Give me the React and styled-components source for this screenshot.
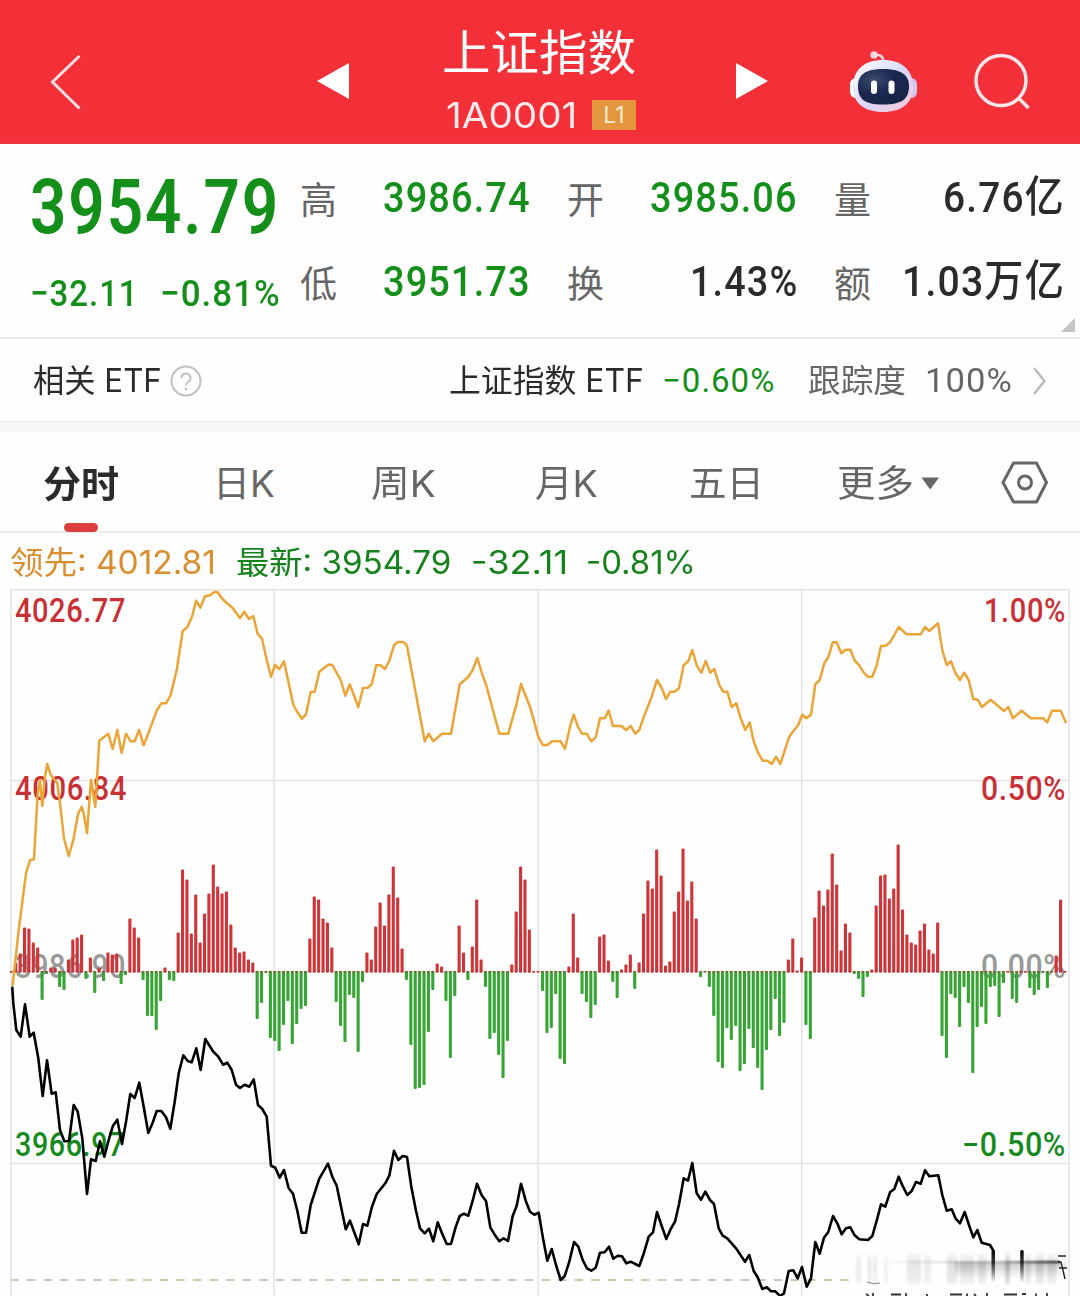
import React, { useLayoutEffect, useRef, useState } from "react"
import styled, { createGlobalStyle } from "styled-components"

const GlobalStyle = createGlobalStyle`
  * {
    box-sizing: border-box;
  }
  body {
    margin: 0;
    background: #fff;
    overflow: hidden;
  }
`

const sans = `"Inter", "Noto Sans CJK SC", sans-serif`
const din = `"Roboto", "Noto Sans CJK SC", sans-serif`

const green = "#14901a"
const ink = "#2b2b2b"
const grey = "#666"

const Page = styled.div`
  width: 1080px;
  height: 1296px;
  overflow: hidden;
  display: flex;
  flex-direction: column;
  background: #fefefe;
  color: ${ink};
  font-family: ${sans};
`

const FitBox = styled.span`
  display: block;
  flex: none;
  width: ${(props) => props.$width}px;
  height: ${(props) => props.$line || 40}px;
  line-height: ${(props) => props.$line || 40}px;
  margin-left: ${(props) => props.$gap || 0}px;
  font-family: ${(props) => (props.$sans ? sans : din)};
  font-size: ${(props) => props.$size}px;
  font-weight: ${(props) => props.$weight || 400};
  letter-spacing: ${(props) => (props.$sans ? "0" : "0.03em")};
  color: ${(props) => props.$color || "inherit"};
  white-space: pre;
`
const FitText = styled.span`
  display: inline-block;
  transform-origin: 0 50%;
`

// Condenses a label so that it always fills the width it is given
const Fit = ({ children, ...props }) => {
  const ref = useRef(null)
  const [scale, setScale] = useState(1)

  useLayoutEffect(() => {
    setScale(props.$width / ref.current.offsetWidth)
  }, [props.$width, children])

  return (
    <FitBox {...props}>
      <FitText ref={ref} style={{ transform: `scaleX(${scale})` }}>
        {children}
      </FitText>
    </FitBox>
  )
}

const Header = styled.header`
  flex: none;
  height: 144px;
  padding: 20px 0 0 50px;
  display: grid;
  grid-template-columns: 267px 125px 294px 113px 124px 58px;
  align-items: center;
  background: #f32f38;
  color: #fff;
  border-bottom: 1px solid #d5444a;
`
const TitleBlock = styled.div`
  align-self: start;
  width: 196px;
  margin-top: 5px;
  display: flex;
  flex-direction: column;
  gap: 18px;
`
const CodeRow = styled.div`
  display: flex;
  align-items: center;
  height: 32px;
  padding-left: 4px;
`
const LevelBadge = styled.span`
  width: 44px;
  height: 30px;
  margin-left: 15px;
  display: flex;
  align-items: center;
  justify-content: center;
  background: #e4963f;
  color: #ffeccb;
  font-size: 23px;
`

const Quote = styled.section`
  flex: none;
  height: 195px;
  display: flex;
  padding-left: 30px;
  border-bottom: 2px solid #ececec;
  position: relative;
`
const Price = styled.div`
  width: 270px;
  padding-top: 26px;
  color: ${green};
`
const Change = styled.div`
  display: flex;
  margin-top: 26px;
`
const Stats = styled.div`
  display: grid;
  grid-template-columns: repeat(3, 231px);
  grid-template-rows: 84px 84px;
  column-gap: 36px;
  padding-top: 11px;
`
const Stat = styled.div`
  display: flex;
  align-items: center;
  justify-content: space-between;
`
const StatLabel = styled.span`
  font-size: 37px;
  line-height: 40px;
  padding-top: 8px;
  color: ${grey};
`
const Corner = styled.svg`
  position: absolute;
  right: 5px;
  bottom: 5px;
`

const Etf = styled.section`
  flex: none;
  height: 82px;
  padding: 1px 0 0 33px;
  display: flex;
  align-items: center;
  color: ${ink};

  svg {
    margin-left: 8px;
  }
`
const Band = styled.div`
  flex: none;
  height: 11px;
  background: #f6f6f7;
  border-top: 1px solid #eee;
`

const Tabs = styled.nav`
  flex: none;
  height: 101px;
  padding-left: 43px;
  display: grid;
  grid-template-columns: 170px 158px 164px 154px 148px 164px 50px;
  border-bottom: 2px solid #ececec;
  color: ${grey};
`
const Tab = styled.div`
  height: 100px;
  padding-top: 3px;
  display: flex;
  align-items: center;
`
const ActiveTab = styled(Tab)`
  width: 76px;
  padding-top: 33px;
  flex-direction: column;

  &::after {
    content: "";
    width: 34px;
    height: 9px;
    margin-top: 18px;
    border-radius: 5px;
    background: #dc3f3d;
  }
`

const Legend = styled.div`
  flex: none;
  height: 56px;
  padding: 10px 0 0 10px;
  display: flex;
  color: #15821b;
`

const ChartSvg = styled.svg`
  flex: none;
  display: block;
`
const AxisText = styled.text`
  font-family: ${din};
  font-size: 32.5px;
  font-weight: 500;
  letter-spacing: 0.02em;
`

const stats = [
  { label: "高", value: "3986.74", width: 148, color: green },
  { label: "开", value: "3985.06", width: 148, color: green },
  { label: "量", value: "6.76亿", width: 122 },
  { label: "低", value: "3951.73", width: 148, color: green },
  { label: "换", value: "1.43%", width: 108 },
  { label: "额", value: "1.03万亿", width: 163 },
]

// One bar for each minute, in pixels above or below the zero line
const bars = [
  0, 10, 19, 45, 44, 30, 25, -29, -3, 5, 5, -16, -19, 13, 33, 35, 38, -8, 15,
  -22, 5, -10, 20, 18, 19, -13, -4, 54, 45, 35, -9, -45, -45, -59, -30, 5, -9,
  -10, 40, 103, 93, 39, 78, 30, 59, 79, 108, 86, 79, 81, 48, 25, 20, 21, 13,
  10, -48, -32, -2, -67, -70, -80, -54, -30, -73, -53, -38, -35, 34, 76, 73,
  54, 50, 25, -31, -55, -71, -24, -27, -81, -11, 20, 13, 46, 70, 47, 78, 106,
  75, 24, -9, -74, -118, -117, -114, -61, -19, 9, 6, -30, -87, -25, 47, 20, -9,
  26, 73, 13, -16, -68, -62, -84, -107, -70, 8, 61, 106, 93, 43, 0, 0, -20,
  -62, -57, -23, -88, -93, 6, 59, 15, -23, -31, -47, -34, 36, 38, 12, -11, -27,
  3, 8, 18, -18, 10, 59, 92, 84, 123, 97, 7, 11, 61, 81, 124, 72, 91, 54, -6,
  -1, -16, -45, -91, -97, -57, -69, -55, -100, -93, -58, -77, -97, -119, -79,
  -59, -28, -65, -52, 13, 34, 2, 15, -54, -68, 55, 82, 67, 83, 119, 88, 22, 49,
  40, -3, -8, -26, -6, 3, 67, 97, 98, 74, 84, 128, 63, 38, 30, 28, 42, 49, 23,
  19, 50, -65, -87, -23, -27, -56, -16, -32, -102, -56, -36, -53, -16, -15,
  -46, -12, 0, -28, -32, 0, 0, -17, -24, -19, -2, -17, -1, 17, 73, 0,
]

// Both curves are stored in thirds of a pixel: [x offset, y offset, points]
const leadCurve = [
  [0, 580, "38,1215 55,1060 65,980 78,880 90,840 102,838 113,640 120,600 127,678 135,590 142,552 152,585 172,610 180,670 192,775 206,828 220,780 235,700 245,680 252,705 261,760 273,600 286,680 298,482 325,461 338,507 352,450 365,519 378,461 392,484 404,484 417,450 431,496 445,460 470,392 484,370 498,370 512,345 530,270 548,153 562,142 577,108 588,62 601,83 615,49 630,46 643,36 653,37 665,54 680,69 698,84 720,115 733,95 747,117 760,108 773,162 786,176 800,240 813,290"],
  [270, 580, "15,255 28,267 42,244 70,375 82,396 96,416 108,403 122,336 134,335 148,275 175,254 186,254 212,300 226,347 239,313 265,381 279,324 293,323 305,313 319,256 331,255 345,267 358,242 372,196 383,186 400,186 411,197 430,300 464,484 476,461 490,484 516,461 543,461 569,313 594,292 608,270 622,234 635,278 650,320 688,461 715,461 740,370 753,312 780,380 805,470"],
  [540, 580, "8,495 22,495 36,484 62,484 75,507 90,440 101,404 113,438 126,461 140,461 154,484 167,472 180,415 194,415 206,392 219,438 245,438 258,450 272,438 286,461 298,450 310,415 335,350 351,300 365,324 378,357 391,335 405,335 417,324 431,256 445,244 457,210 470,256 484,278 497,243 511,278 523,267 537,313 549,335 562,335 575,381 589,370 602,415 616,450 629,427 640,480 654,518 668,542 682,542 695,552 708,530 721,552 734,512 748,470 762,450 773,438"],
  [800, 580, "7,404 19,415 33,404 46,313 59,300 73,250 85,232 98,187 110,187 124,220 137,209 151,209 165,243 178,256 191,278 203,290 217,290 230,256 243,198 257,197 270,187 283,165 296,141 320,163 362,163 375,141 388,153 414,130 427,210 440,255 453,244 466,278 480,300 493,278 506,300 520,357 533,359 546,381 572,359 612,393 625,381 639,415 665,392 692,415 730,415 742,427 756,392 782,392 797,427"],
]
const priceCurve = [
  [0, 940, "37,143 40,190 49,270 62,290 75,193 89,290 101,278 115,355 128,468 141,361 155,461 167,457 180,570 193,604 207,603 221,495 233,515 247,595 261,762 273,658 287,663 300,604 313,650 326,600 339,557 352,539 366,612 378,545 391,462 404,474 418,428 431,500 445,579 458,548 470,513 484,513 498,532 511,566 524,485 536,400 550,346 563,363 575,367 589,325 602,390 616,297 640,335 655,350 669,374 682,368 695,390 708,434 720,444 734,434 748,440 761,418 774,495 787,507 800,530 813,677 826,683 839,713 852,690 866,745 879,761 892,812 905,878 918,878 932,795 958,716 984,671 997,710 1010,737 1037,868 1050,842 1076,913"],
  [360, 940, "9,852 22,857 36,800 50,762 76,730 88,707 102,632 115,660 128,648 141,651 154,740 168,812 180,865 194,880 207,866 220,904 233,847 246,880 260,912 273,912 286,865 299,828 312,821 325,827 338,782 351,731 365,766 378,783 391,862 404,884 418,904 431,895 444,903 458,828 470,797 483,731 497,782 510,815 523,824 536,818 549,895 562,962 575,927 589,978 602,1020 614,1008 628,965 642,906 655,920 668,960 681,985 694,992 707,983 720,938 734,937 747,920 760,956 773,947 786,949 799,970 812,965 838,978 852,938 866,890 879,877 891,816 905,858 919,897 932,867 945,845 957,793 971,715 984,722 997,669 1010,760 1023,779 1036,755 1050,780 1062,792 1076,865"],
  [720, 940, "8,887 22,895 48,925 75,965 88,945 101,993 113,1012 127,1047 140,1042 153,1054 166,1054 180,1068 192,1060 206,993 220,991 233,1015 246,981 260,1040 273,1015 286,906 299,941 312,893 325,876 339,828 352,850 365,883 378,865 391,862 404,886 418,898 444,900 457,888 470,842 483,793 496,800 510,757 523,747 536,710 549,740 562,765 575,753 588,726 602,731 615,691 628,709 655,706 667,765 680,812 695,808 707,836 720,850 734,816 747,855 760,892 772,870 785,908 810,915 820,932"],
]

const toPoints = (curve) =>
  curve
    .map(([dx, dy, points]) =>
      points
        .split(" ")
        .map((point) => {
          const [x, y] = point.split(",")
          return `${(dx + x / 3).toFixed(1)},${(dy + y / 3).toFixed(1)}`
        })
        .join(" ")
    )
    .join(" ")

const axis = [
  { text: "4026.77", x: 15, y: 621.5, width: 111, color: "#c93036" },
  { text: "1.00%", x: 984, y: 621.5, width: 82, color: "#c93036" },
  { text: "4006.84", x: 15, y: 799.5, width: 112, color: "#c93036" },
  { text: "0.50%", x: 981, y: 799.5, width: 85, color: "#c93036" },
  { text: "3986.90", x: 15, y: 977.5, width: 111, color: "#999" },
  { text: "0.00%", x: 981, y: 977.5, width: 85, color: "#999" },
  { text: "3966.97", x: 15, y: 1156, width: 110, color: "#178a1e" },
  { text: "−0.50%", x: 962, y: 1156, width: 104, color: "#178a1e" },
]

// [x, width, opacity] of the smeared strokes in the corner
const streaks = [
  [856, 5, 0.08],
  [868, 3, 0.12],
  [873, 4, 0.08],
  [884, 4, 0.06],
  [907, 14, 0.1],
  [924, 7, 0.08],
  [947, 10, 0.12],
  [960, 14, 0.1],
  [978, 8, 0.12],
  [1005, 5, 0.22],
  [1025, 6, 0.12],
  [1036, 8, 0.14],
  [1047, 9, 0.12],
]

const Robot = () => (
  <svg width="68" height="64" viewBox="849 47 68 64">
    <defs>
      <linearGradient id="shell" x1="0" y1="0" x2="1" y2="1">
        <stop offset="0" stopColor="#fff" />
        <stop offset="0.55" stopColor="#d8d6fb" />
        <stop offset="1" stopColor="#fbc9d6" />
      </linearGradient>
      <radialGradient id="visor" cx="0.3" cy="0.3" r="0.8">
        <stop offset="0" stopColor="#3d4a70" />
        <stop offset="0.5" stopColor="#1c284f" />
        <stop offset="1" stopColor="#172449" />
      </radialGradient>
    </defs>
    <path
      d="M874 52 Q883 50 884 60"
      fill="none"
      stroke="#fbdce4"
      strokeWidth="2.5"
    />
    <circle cx="874" cy="52" r="3.7" fill="#fbd6e0" />
    <rect x="850" y="75" width="12" height="20" rx="6" fill="#fff" />
    <rect x="905" y="75" width="12" height="20" rx="6" fill="#d5c3f2" />
    <path
      d="M883 57 C902 57 913 67 913 84 C913 100 902 109 883 109 C864 109 853 100 853 84 C853 67 864 57 883 57Z"
      fill="url(#shell)"
    />
    <path
      d="M883 66 C901 66 909 72 909 83 C909 96 902 101.500 883 101.500 C864 101.500 858 96 858 83 C858 72 865 66 883 66Z"
      fill="url(#visor)"
    />
    <rect x="871" y="77.500" width="6" height="13.500" rx="3" fill="#fff" />
    <rect x="888.500" y="77.500" width="6" height="13.500" rx="3" fill="#fff" />
  </svg>
)

const Chart = () => (
  <ChartSvg width="1080" height="707" viewBox="0 589 1080 707">
    <defs>
      <linearGradient id="streak" x1="0" y1="0" x2="0" y2="1">
        <stop offset="0" stopColor="#000" stopOpacity="0.2" />
        <stop offset="0.4" stopColor="#000" />
        <stop offset="1" stopColor="#000" stopOpacity="0.5" />
      </linearGradient>
      <linearGradient id="stroke" x1="0" y1="0" x2="0" y2="1">
        <stop offset="0" stopColor="#000" />
        <stop offset="0.4" stopColor="#000" stopOpacity="0.75" />
        <stop offset="1" stopColor="#000" stopOpacity="0.05" />
      </linearGradient>
      <linearGradient id="smear" x1="0" y1="0" x2="1" y2="0">
        <stop offset="0" stopColor="#000" stopOpacity="0" />
        <stop offset="0.7" stopColor="#000" stopOpacity="0.25" />
        <stop offset="1" stopColor="#000" />
      </linearGradient>
      <linearGradient id="shade" x1="0" y1="0" x2="0" y2="1">
        <stop offset="0" stopColor="#000" stopOpacity="0.2" />
        <stop offset="1" stopColor="#000" stopOpacity="0" />
      </linearGradient>
      <filter id="soft">
        <feGaussianBlur stdDeviation="1.300" />
      </filter>
    </defs>

    <g stroke="#e2e2e4" strokeWidth="1.500">
      {[11, 274, 538, 801.7, 1069].map((x) => (
        <line key={x} x1={x} x2={x} y1="589" y2="1296" />
      ))}
      {[589.7, 780.5, 1163.5].map((y) => (
        <line key={y} x1="10" x2="1069" y1={y} y2={y} />
      ))}
    </g>
    <line
      x1="11"
      x2="852"
      y1="1280"
      y2="1280"
      stroke="#b3bd96"
      strokeWidth="1.500"
      strokeDasharray="8.500 8.100"
      strokeDashoffset="0.800"
    />

    {axis.map(({ text, x, y, width, color }) => (
      <AxisText
        key={text}
        x={x}
        y={y}
        fill={color}
        textLength={width}
        lengthAdjust="spacingAndGlyphs"
      >
        {text}
      </AxisText>
    ))}

    {bars.map((value, i) => {
      const height = Math.max(Math.abs(value), 1.5)
      return (
        <rect
          key={i}
          x={9.8 + i * 4.39}
          y={value < 0 ? 971 : 972.5 - height}
          width="3.100"
          height={height}
          rx="1"
          fill={value < 0 ? "#37a534" : "#cf3438"}
        />
      )
    })}
    <line
      x1="9.800"
      x2="1066"
      y1="971.800"
      y2="971.800"
      stroke="#a0302a"
      strokeWidth="1.500"
      strokeDasharray="2.800 1.590"
      opacity="0.600"
    />

    <g fill="none" strokeLinejoin="round" strokeLinecap="round">
      <polyline
        points={toPoints(leadCurve)}
        stroke="#eaa536"
        strokeWidth="2.500"
      />
      <polyline points={toPoints(priceCurve)} stroke="#000" strokeWidth="2.600" />
    </g>

    <rect x="855" y="1252" width="213" height="34" fill="#fefefe" opacity="0.900" />
    <g filter="url(#soft)">
      <rect x="955" y="1262" width="110" height="16" fill="url(#shade)" />
      {streaks.map(([x, width, opacity]) => (
        <rect
          key={x}
          x={x}
          y="1253"
          width={width}
          height="31"
          fill="url(#streak)"
          opacity={opacity}
        />
      ))}
      <rect x="870" y="1261" width="190" height="2" fill="url(#smear)" />
    </g>
    {[991.5, 1020.2].map((x) => (
      <rect
        key={x}
        x={x}
        y="1250"
        width="3.500"
        height="32"
        rx="1.500"
        fill="url(#stroke)"
      />
    ))}
    <path
      d="M1058 1257h9M1062 1257v24M1058 1270h9M1056 1281h8"
      stroke="#fff"
      strokeWidth="3"
      fill="none"
    />
    <path
      d="M1058 1262L1061 1262L1065 1279M1058 1256h8M1059 1268h8"
      stroke="#222"
      strokeWidth="1.400"
      fill="none"
    />
    <path
      d="M867 1282q6 3 13 1"
      stroke="#888"
      strokeWidth="1"
      fill="none"
    />
    <path
      d="M866 1294l3 2M873 1293v3M891 1294.500h10M906 1293v3M927 1294v2M950 1294.500h12M967 1293.500v2.500M974 1294l2 2M987 1293v3M1004 1294.500h13M1022 1294h4M1036 1293.500v2.500M1047 1293v3"
      stroke="#333"
      strokeWidth="1.800"
      fill="none"
    />
  </ChartSvg>
)

const App = () => {
  return (
    <Page>
      <GlobalStyle />
      <Header>
        <svg width="32" height="60" viewBox="50 52 32 60">
          <path
            d="M79.500 56L52.500 82L79.500 108.500"
            fill="none"
            stroke="#ffe0e2"
            strokeWidth="3"
          />
        </svg>
        <svg width="33" height="38" viewBox="0 0 33 38">
          <path d="M0 18L32 0V36Z" fill="#fff" />
        </svg>
        <TitleBlock>
          <Fit $width={194} $size={48} $line={56} $sans>
            上证指数
          </Fit>
          <CodeRow>
            <Fit $width={131} $size={36} $line={32} $sans $color="#ffe9ea">
              1A0001
            </Fit>
            <LevelBadge>L1</LevelBadge>
          </CodeRow>
        </TitleBlock>
        <svg width="33" height="38" viewBox="0 0 33 38">
          <path d="M0 0L32 18L0 36Z" fill="#fff" />
        </svg>
        <Robot />
        <svg width="58" height="60" viewBox="973 52 58 60">
          <g fill="none" stroke="#ffe6e8" strokeWidth="3.500">
            <circle cx="1001" cy="80.500" r="25" />
            <path d="M1018.500 98L1028.500 108" />
          </g>
        </svg>
      </Header>

      <Quote>
        <Price>
          <Fit $width={250} $size={76} $line={74} $weight={600}>
            3954.79
          </Fit>
          <Change>
            <Fit $width={109} $size={37.5} $line={46} $weight={500}>
              −32.11
            </Fit>
            <Fit $width={121} $size={37.5} $line={46} $weight={500} $gap={21}>
              −0.81%
            </Fit>
          </Change>
        </Price>
        <Stats>
          {stats.map(({ label, value, width, color }) => (
            <Stat key={label}>
              <StatLabel>{label}</StatLabel>
              <Fit $width={width} $size={43} $weight={500} $color={color}>
                {value}
              </Fit>
            </Stat>
          ))}
        </Stats>
        <Corner width="14" height="14" viewBox="0 0 14 14">
          <path d="M14 0V14H0Z" fill="#c4c4c4" />
        </Corner>
      </Quote>

      <Etf>
        <Fit $width={129} $size={32} $sans>
          相关 ETF
        </Fit>
        <svg width="32" height="32" viewBox="0 0 32 32">
          <g fill="none" stroke="#c0c0c0" strokeWidth="2">
            <circle cx="16" cy="16" r="14.500" />
            <path d="M11.500 13a4.500 4.500 0 1 1 6.500 4q-2 1.200-2 3.500" />
          </g>
          <circle cx="16" cy="24" r="1.300" fill="#c0c0c0" />
        </svg>
        <Fit $width={195} $size={32} $gap={247} $sans>
          上证指数 ETF
        </Fit>
        <Fit $width={113} $size={33} $gap={18} $color={green}>
          −0.60%
        </Fit>
        <Fit $width={98} $size={32} $gap={33} $color={grey} $sans>
          跟踪度
        </Fit>
        <Fit $width={88} $size={33} $gap={19} $color={grey}>
          100%
        </Fit>
        <svg width="32" height="30" viewBox="0 0 32 30">
          <path
            d="M13 2L23.500 15L13 28"
            fill="none"
            stroke="#bbb"
            strokeWidth="2.500"
          />
        </svg>
      </Etf>
      <Band />

      <Tabs>
        <ActiveTab>
          <Fit $width={76} $size={37} $weight={700} $color={ink} $sans>
            分时
          </Fit>
        </ActiveTab>
        <Tab>
          <Fit $width={62} $size={37} $sans>
            日K
          </Fit>
        </Tab>
        <Tab>
          <Fit $width={65} $size={37} $sans>
            周K
          </Fit>
        </Tab>
        <Tab>
          <Fit $width={63} $size={37} $sans>
            月K
          </Fit>
        </Tab>
        <Tab>
          <Fit $width={75} $size={37} $sans>
            五日
          </Fit>
        </Tab>
        <Tab>
          <Fit $width={77} $size={37} $sans>
            更多
          </Fit>
          <svg width="26" height="14" viewBox="0 0 26 14">
            <path d="M7.500 0.500H25L16.200 12.500Z" fill="#666" />
          </svg>
        </Tab>
        <Tab>
          <svg width="48" height="46" viewBox="0 0 48 46">
            <g fill="none" stroke="#666" strokeWidth="3">
              <path
                d="M12.500 2H35.500L45.500 21.500L35.500 41H12.500L2 21.500Z"
                strokeLinejoin="round"
              />
              <circle cx="24" cy="21.500" r="6.500" />
            </g>
          </svg>
        </Tab>
      </Tabs>

      <Legend>
        <Fit $width={206} $size={32} $sans $color="#d98e2e">
          领先: 4012.81
        </Fit>
        <Fit $width={215} $size={32} $gap={20} $sans>
          最新: 3954.79
        </Fit>
        <Fit $width={97} $size={32} $gap={20} $sans>
          -32.11
        </Fit>
        <Fit $width={110} $size={32} $gap={18} $sans>
          -0.81%
        </Fit>
      </Legend>

      <Chart />
    </Page>
  )
}

export default App
